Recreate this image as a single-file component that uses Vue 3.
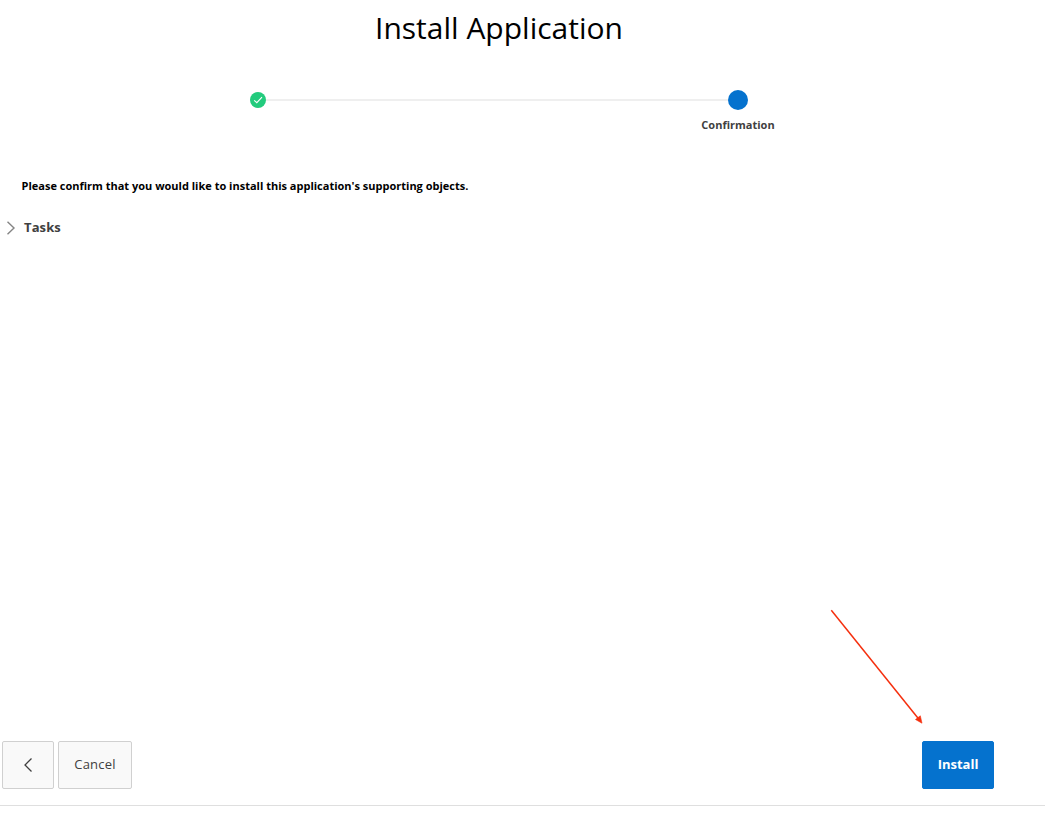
<script setup>
import { ref } from 'vue'

const expanded = ref(false)
</script>

<template>
  <div class="page">
    <header><h1>Install Application</h1></header>
    <div class="wizard">
      <svg class="done" viewBox="0 0 16 16"><circle cx="8" cy="8" r="8" /><path d="M4.2 8.3 6.8 10.7 12 5.2" /></svg>
      <span class="track"></span>
      <span class="current"></span>
    </div>
    <div class="step-label"><span>Confirmation</span></div>
    <main>
      <p>Please confirm that you would like to install this application's supporting objects.</p>
      <div class="tasks" @click="expanded = !expanded">
        <svg viewBox="0 0 10 16"><path d="M1.5 1.8 8 8 1.5 14.2" /></svg>
        <h2>Tasks</h2>
      </div>
    </main>
    <footer>
      <button class="back" aria-label="Back"><svg viewBox="0 0 10 16"><path d="M8.5 1.5 2 8 8.5 14.5" /></svg></button>
      <button class="cancel"><span>Cancel</span></button>
      <button class="install"><span>Install</span></button>
    </footer>
    <svg class="arrow" viewBox="0 0 100 120">
      <path class="shaft" d="M1.3 1.3 89.3 110.8" />
      <path class="head" d="M92 114.2 85.5 110.5 90.3 106.8Z" />
    </svg>
  </div>
</template>

<style>
body { background: #fff; }
</style>

<style scoped>
.page {
  position: relative;
  display: flex;
  flex-direction: column;
  height: 814px;
  box-sizing: border-box;
  overflow: hidden;
  background: #fff;
  color: #404040;
  font-family: "Open Sans", "Noto Sans", sans-serif;
}
header { width: 998px; height: 90px; text-align: center; }
h1 { margin: 0; padding-top: 8px; font-size: 30px; line-height: 40px; font-weight: 400; color: #000; }
.wizard { display: flex; align-items: center; width: 498px; height: 20px; margin-left: 250px; }
.done { width: 16px; height: 16px; }
.done circle { fill: #23cb7d; }
.done path { fill: none; stroke: #fff; stroke-width: 1.1; }
.track { flex: 1; height: 2px; background: #efefef; }
.current { width: 20px; height: 20px; border-radius: 50%; background: #0572ce; }
.step-label { display: flex; justify-content: center; width: 140px; margin: 7px 0 0 668px; font-size: 11px; line-height: 16px; font-weight: 700; white-space: nowrap; }
main { flex: 1; }
p { margin: 45px 0 0 21.5px; font-size: 11px; line-height: 16px; font-weight: 700; color: #000; white-space: nowrap; }
.tasks { display: flex; align-items: center; gap: 8px; height: 20px; margin: 24px 0 0 6px; }
.tasks svg { width: 10px; height: 16px; }
.tasks path { fill: none; stroke: #858585; stroke-width: 1.4; }
h2 { margin: -2px 0 0; font-size: 13px; line-height: 20px; font-weight: 700; letter-spacing: .1px; }
footer { display: flex; gap: 4px; height: 64px; padding: 0 51px 0 2px; margin-bottom: 8px; border-bottom: 1px solid #dfdfdf; }
button { display: flex; align-items: center; justify-content: center; box-sizing: border-box; height: 48px; padding: 0; border: 1px solid #d0d0d0; border-radius: 2px; background: #f9f9f9; color: #404040; font: 400 13px/20px "Open Sans", "Noto Sans", sans-serif; letter-spacing: .2px; }
.back { width: 52px; }
.back svg { width: 10px; height: 16px; }
.back path { fill: none; stroke: #404040; stroke-width: 1.3; }
.cancel { width: 74px; }
.install { width: 72px; margin-left: auto; border-color: #0572ce; background: #0572ce; color: #fff; font-weight: 700; letter-spacing: 0; }
button span { position: relative; top: -1px; }
.arrow { position: absolute; left: 830px; top: 609px; width: 100px; height: 120px; pointer-events: none; }
.shaft { fill: none; stroke: #f52f0e; stroke-width: 1.5; }
.head { fill: #f52f0e; stroke: #f52f0e; stroke-width: .6; }
</style>
